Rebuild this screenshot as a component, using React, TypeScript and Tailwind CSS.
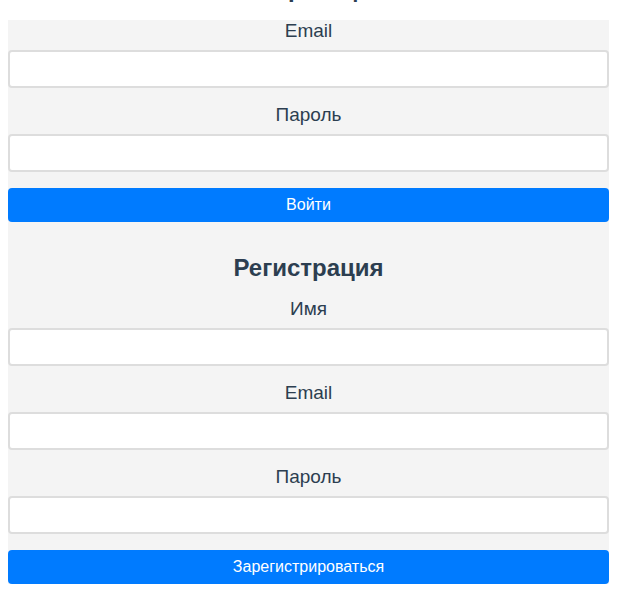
function Field({ label }: { label: string }) {
  return (
    <div className="mb-[16px]">
      <label className="block text-center text-[19px] leading-[22px] mb-[8px]">{label}</label>
      <input className="block w-full h-[38px] bg-white border-2 border-[#dddddd] rounded-[4px] px-2 outline-none" />
    </div>
  )
}

export default function App() {
  return (
    <div
      className="min-h-[615px] bg-white text-[#2c3e50] px-[8px]"
      style={{ fontFamily: '"Liberation Sans", Arial, sans-serif' }}
    >
      <h2 className="w-[600px] text-center text-[24px] leading-[28px] font-bold -mt-[25px] mb-[17px]">
        Авторизация
      </h2>

      <div className="w-[601px] bg-[#f4f4f4]">
        {/* Вход */}
        <form>
          <Field label="Email" />
          <Field label="Пароль" />
          <button
            type="button"
            className="block w-full h-[34px] bg-[#007bff] text-white text-[16px] rounded-[4px]"
          >
            Войти
          </button>
        </form>

        {/* Регистрация */}
        <h2 className="text-center text-[24px] leading-[28px] font-bold mt-[32px] mb-[16px]">
          Регистрация
        </h2>
        <form>
          <Field label="Имя" />
          <Field label="Email" />
          <Field label="Пароль" />
          <button
            type="button"
            className="block w-full h-[34px] bg-[#007bff] text-white text-[16px] rounded-[4px]"
          >
            Зарегистрироваться
          </button>
        </form>
      </div>
    </div>
  )
}
